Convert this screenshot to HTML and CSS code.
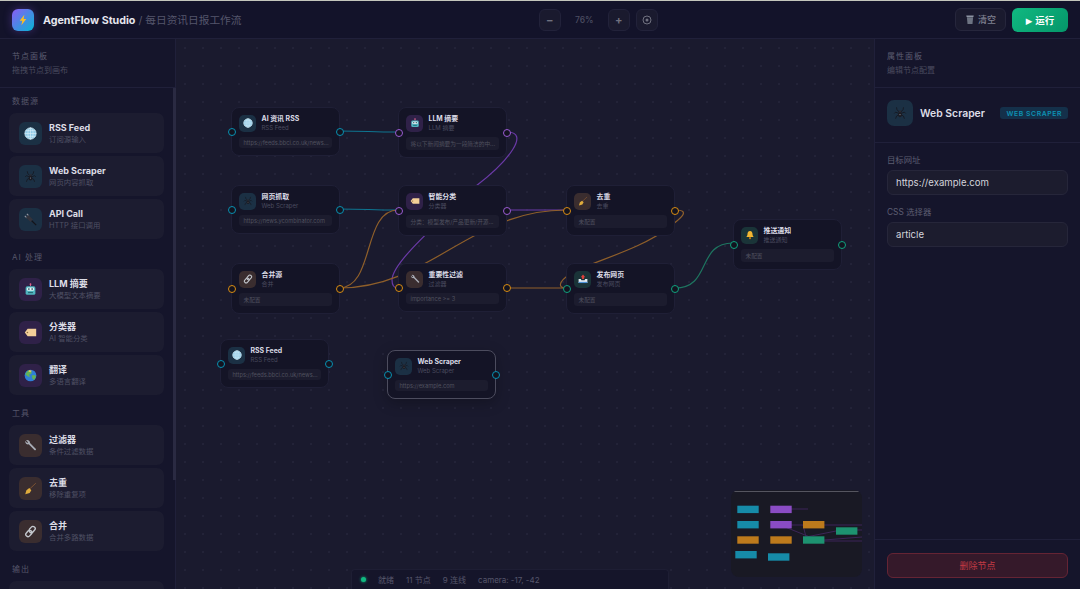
FILE: index.html
```html
<!DOCTYPE html>
<html lang="zh-CN">
<head>
    <meta charset="UTF-8">
    <meta name="viewport" content="width=device-width, initial-scale=1.0">
    <title>AgentFlow Studio</title>
    <link rel="stylesheet" href="styles.css">
</head>
<body>
    <svg class="sprite" xmlns="http://www.w3.org/2000/svg">
        <symbol id="i-bolt" viewBox="0 0 16 16"><path d="M9.8 1 3.6 9h3.5L5.8 15l6.6-8.4H8.8z" fill="#fbbf24"/></symbol>
        <symbol id="i-globe" viewBox="0 0 16 16"><circle cx="8" cy="8" r="7" fill="#8fc9e6"/><g fill="none" stroke="#d9eef7" stroke-width=".8"><circle cx="8" cy="8" r="7"/><ellipse cx="8" cy="8" rx="3.2" ry="7"/><path d="M8 1v14M1 8h14M2 4.5h12M2 11.500h12"/></g></symbol>
        <symbol id="i-spider" viewBox="0 0 16 16"><g fill="none" stroke="#15151c" stroke-width=".9"><path d="M7 7 4.500 4 4 1.500M9 7l2.500-3 .5-2.500M6.800 8.500 3 7 1.500 8.500M9.200 8.500 13 7l1.500 1.500M7 10l-3 1.500-1 3M9 10l3 1.500 1 3"/></g><ellipse cx="8" cy="6.500" rx="1.500" ry="1.400" fill="#2a2a33"/><ellipse cx="8" cy="10" rx="2.200" ry="2.800" fill="#1b1b22"/><circle cx="8" cy="9.800" r=".7" fill="#8a8a98"/></symbol>
        <symbol id="i-plug" viewBox="0 0 16 16"><path d="M3.500 6 1 3.500M6 3.500 3.500 1" stroke="#9a9aa4" stroke-width="1.300"/><path d="M5.500 2.500 11 8 8 11 2.500 5.500z" fill="#33333c"/><path d="M9.500 9.500 15 15" stroke="#14141a" stroke-width="1.500"/></symbol>
        <symbol id="i-robot" viewBox="0 0 16 16"><path d="M8 1v3" stroke="#c86b8a" stroke-width="1.200"/><circle cx="8" cy="1.500" r="1.100" fill="#e05d8a"/><rect x="2" y="4" width="12" height="10.500" rx="2" fill="#4fb3bf"/><rect x="3.500" y="5.500" width="9" height="4" rx="1.500" fill="#dff3f5"/><circle cx="6" cy="7.500" r="1" fill="#1d3b52"/><circle cx="10" cy="7.500" r="1" fill="#1d3b52"/><rect x="5" y="11" width="6" height="1.500" fill="#276a78"/></symbol>
        <symbol id="i-tag" viewBox="0 0 16 16"><path d="M4.500 3.500H15v9H4.500L1 8z" fill="#f3cf98"/><circle cx="4.200" cy="8" r="1" fill="#8f6b3f"/></symbol>
        <symbol id="i-earth" viewBox="0 0 16 16"><circle cx="8" cy="8" r="7.200" fill="#2f7fd6"/><path d="M5 1.500 9.500 3 9 6 6.500 6.500 7 10 4.500 9 1.500 6.500zM9.500 8l4 -.500 1.200 2-2.200 4-2-1.500z" fill="#62b356"/><path d="M6.500 1.200 9.500 2 8 4 5.500 3.500z" fill="#e4c25a"/></symbol>
        <symbol id="i-wrench" viewBox="0 0 16 16"><path d="M2.500 1.500 5 4 4 5 1.500 2.600A3.500 3.500 0 0 0 5.800 6.500l7 7a1.100 1.100 0 0 0 1.600-1.600l-7-7A3.500 3.500 0 0 0 2.500 1.500z" fill="#a9adb6"/></symbol>
        <symbol id="i-broom" viewBox="0 0 16 16"><path d="m14.500 1.500-8 7.500" stroke="#8a5a32" stroke-width="1"/><path d="M6.500 7.500 9 10l-2 3.500-5.500 1.500 1.500-5z" fill="#e0ac3c"/></symbol>
        <symbol id="i-link" viewBox="0 0 16 16"><g fill="none" stroke="#c4c8ce" stroke-width="1.700"><rect x="7.300" y="1.300" width="5.500" height="8.500" rx="2.700" transform="rotate(42 10 5.500)"/><rect x="3.200" y="6.200" width="5.500" height="8.500" rx="2.700" transform="rotate(42 6 10.500)"/></g></symbol>
        <symbol id="i-outbox" viewBox="0 0 16 16"><path d="M8 .8 11.500 5H9.500v3h-3V5H4.500z" fill="#e0403a"/><path d="M1 8h3.500l1 2h5l1-2H15v6.500H1z" fill="#e8edf3"/><path d="M1 12.500h14v2H1z" fill="#4d93d9"/></symbol>
        <symbol id="i-bell" viewBox="0 0 16 16"><path d="M8 1.500c-3 0-4 2.500-4 5 0 2.500-1 3.500-2 4.800h12c-1-1.300-2-2.300-2-4.800 0-2.500-1-5-4-5z" fill="#f2b632"/><circle cx="8" cy="13" r="1.700" fill="#b97a16"/></symbol>
        <symbol id="i-trash" viewBox="0 0 16 16"><path d="M2 1.500h12l-.6 2.500H2.600z" fill="#8d94a3"/><path d="M3 4.500h10l-1 10.500H4z" fill="#6d7482"/></symbol>
    </svg>

    <header class="topbar">
        <div class="brand">
            <div class="logo"><svg class="ico"><use href="#i-bolt"/></svg></div>
            <div class="brand-text"><strong>AgentFlow Studio</strong> / 每日资讯日报工作流</div>
        </div>
        <div class="zoom">
            <button class="zoom-btn">−</button>
            <span class="zoom-val">76%</span>
            <button class="zoom-btn">+</button>
            <button class="zoom-btn"><svg class="target" viewBox="0 0 10 10"><circle cx="5" cy="5" r="4" fill="none" stroke="currentColor"/><circle cx="5" cy="5" r="1.500" fill="currentColor"/></svg></button>
        </div>
        <div class="actions">
            <button class="btn-clear"><svg class="ico-btn"><use href="#i-trash"/></svg>清空</button>
            <button class="btn-run"><span class="play">▶</span>运行</button>
        </div>
    </header>

    <div class="workspace">
        <aside class="sidebar">
            <div class="panel-head">
                <div class="panel-title">节点面板</div>
                <div class="panel-sub">拖拽节点到画布</div>
            </div>
            <div class="palette">
                <div class="group-label">数据源</div>
                <div class="card"><div class="tile teal"><svg class="ico"><use href="#i-globe"/></svg></div><div><div class="card-title">RSS Feed</div><div class="card-sub">订阅源输入</div></div></div>
                <div class="card"><div class="tile teal"><svg class="ico"><use href="#i-spider"/></svg></div><div><div class="card-title">Web Scraper</div><div class="card-sub">网页内容抓取</div></div></div>
                <div class="card"><div class="tile teal"><svg class="ico"><use href="#i-plug"/></svg></div><div><div class="card-title">API Call</div><div class="card-sub">HTTP 接口调用</div></div></div>
                <div class="group-label">AI 处理</div>
                <div class="card"><div class="tile purple"><svg class="ico"><use href="#i-robot"/></svg></div><div><div class="card-title">LLM 摘要</div><div class="card-sub">大模型文本摘要</div></div></div>
                <div class="card"><div class="tile purple"><svg class="ico"><use href="#i-tag"/></svg></div><div><div class="card-title">分类器</div><div class="card-sub">AI 智能分类</div></div></div>
                <div class="card"><div class="tile purple"><svg class="ico"><use href="#i-earth"/></svg></div><div><div class="card-title">翻译</div><div class="card-sub">多语言翻译</div></div></div>
                <div class="group-label">工具</div>
                <div class="card"><div class="tile orange"><svg class="ico"><use href="#i-wrench"/></svg></div><div><div class="card-title">过滤器</div><div class="card-sub">条件过滤数据</div></div></div>
                <div class="card"><div class="tile orange"><svg class="ico"><use href="#i-broom"/></svg></div><div><div class="card-title">去重</div><div class="card-sub">移除重复项</div></div></div>
                <div class="card"><div class="tile orange"><svg class="ico"><use href="#i-link"/></svg></div><div><div class="card-title">合并</div><div class="card-sub">合并多路数据</div></div></div>
                <div class="group-label">输出</div>
                <div class="card"><div class="tile green"><svg class="ico"><use href="#i-outbox"/></svg></div></div>
            </div>
            <div class="scroll-thumb"></div>
        </aside>

        <main class="canvas">
            <svg class="edges" viewBox="176 39 699 550">
                <path class="e-teal" d="M339 131C368 131 369 132 398 132"/>
                <path class="e-teal" d="M339 209C368 209 369 210 398 210"/>
                <path class="e-purple" d="M507 132C530 132 510 160 476 186C440 222 392 262 392 280C392 285 394 288 398 288"/>
                <path class="e-purple" d="M507 210C536 210 537 210 566 210"/>
                <path class="e-orange" d="M339 288C375 288 362 210 398 210"/>
                <path class="e-orange" d="M339 288C430 288 470 210 566 210"/>
                <path class="e-orange" d="M507 288C536 288 537 288 566 288"/>
                <path class="e-orange" d="M675 210C692 210 680 219 668 228C640 250 590 262 570 274C558 282 558 288 566 288"/>
                <path class="e-green" d="M675 288C712 288 696 243 733 243"/>
            </svg>

            <div class="node n-rss"><i class="port left p-teal"></i><i class="port right p-teal"></i>
                <div class="node-head"><div class="node-ico teal"><svg class="ico"><use href="#i-globe"/></svg></div><div><div class="node-title">AI 资讯 RSS</div><div class="node-sub">RSS Feed</div></div></div>
                <div class="node-conf">https://feeds.bbci.co.uk/news...</div>
            </div>
            <div class="node n-llm"><i class="port left p-purple"></i><i class="port right p-purple"></i>
                <div class="node-head"><div class="node-ico purple"><svg class="ico"><use href="#i-robot"/></svg></div><div><div class="node-title">LLM 摘要</div><div class="node-sub">LLM 摘要</div></div></div>
                <div class="node-conf">将以下新闻摘要为一段简洁的中...</div>
            </div>
            <div class="node n-web"><i class="port left p-teal"></i><i class="port right p-teal"></i>
                <div class="node-head"><div class="node-ico teal"><svg class="ico"><use href="#i-spider"/></svg></div><div><div class="node-title">网页抓取</div><div class="node-sub">Web Scraper</div></div></div>
                <div class="node-conf">https://news.ycombinator.com</div>
            </div>
            <div class="node n-cls"><i class="port left p-purple"></i><i class="port right p-purple"></i>
                <div class="node-head"><div class="node-ico purple"><svg class="ico"><use href="#i-tag"/></svg></div><div><div class="node-title">智能分类</div><div class="node-sub">分类器</div></div></div>
                <div class="node-conf">分类：模型发布/产品更新/开源...</div>
            </div>
            <div class="node n-dedup"><i class="port left p-orange"></i><i class="port right p-orange"></i>
                <div class="node-head"><div class="node-ico orange"><svg class="ico"><use href="#i-broom"/></svg></div><div><div class="node-title">去重</div><div class="node-sub">去重</div></div></div>
                <div class="node-conf">未配置</div>
            </div>
            <div class="node n-merge"><i class="port left p-orange"></i><i class="port right p-orange"></i>
                <div class="node-head"><div class="node-ico orange"><svg class="ico"><use href="#i-link"/></svg></div><div><div class="node-title">合并源</div><div class="node-sub">合并</div></div></div>
                <div class="node-conf">未配置</div>
            </div>
            <div class="node n-filter"><i class="port left p-orange"></i><i class="port right p-orange"></i>
                <div class="node-head"><div class="node-ico orange"><svg class="ico"><use href="#i-wrench"/></svg></div><div><div class="node-title">重要性过滤</div><div class="node-sub">过滤器</div></div></div>
                <div class="node-conf">importance &gt;= 3</div>
            </div>
            <div class="node n-publish"><i class="port left p-green"></i><i class="port right p-green"></i>
                <div class="node-head"><div class="node-ico green"><svg class="ico"><use href="#i-outbox"/></svg></div><div><div class="node-title">发布网页</div><div class="node-sub">发布网页</div></div></div>
                <div class="node-conf">未配置</div>
            </div>
            <div class="node n-push"><i class="port left p-green"></i><i class="port right p-green"></i>
                <div class="node-head"><div class="node-ico green"><svg class="ico"><use href="#i-bell"/></svg></div><div><div class="node-title">推送通知</div><div class="node-sub">推送通知</div></div></div>
                <div class="node-conf">未配置</div>
            </div>
            <div class="node n-rss2"><i class="port left p-teal"></i><i class="port right p-teal"></i>
                <div class="node-head"><div class="node-ico teal"><svg class="ico"><use href="#i-globe"/></svg></div><div><div class="node-title">RSS Feed</div><div class="node-sub">RSS Feed</div></div></div>
                <div class="node-conf">https://feeds.bbci.co.uk/news...</div>
            </div>
            <div class="node n-web2 selected"><i class="port left p-teal"></i><i class="port right p-teal"></i>
                <div class="node-head"><div class="node-ico teal"><svg class="ico"><use href="#i-spider"/></svg></div><div><div class="node-title">Web Scraper</div><div class="node-sub">Web Scraper</div></div></div>
                <div class="node-conf">https://example.com</div>
            </div>

            <div class="statusbar">
                <i class="status-dot"></i>
                <span>就绪</span><span>11 节点</span><span>9 连线</span><span>camera: -17, -42</span>
            </div>

            <div class="minimap">
                <svg viewBox="731 490 131 87">
                    <path class="mm-view" d="M733 491.500H860"/>
                    <path class="mm-line" d="M791 509H808M791 525H803M824 525H862M780 525 815 539M803 525 806 537M806 537 836 531M824 540 862 537M824 541 862 541M857 530H862"/>
                    <g class="mm-teal"><rect x="737.300" y="505.700" width="21.400" height="7.400"/><rect x="737.300" y="521" width="21.400" height="7.400"/><rect x="735.300" y="551" width="21.400" height="7.400"/><rect x="768" y="553.300" width="21.400" height="7.400"/></g>
                    <g class="mm-purple"><rect x="770.300" y="505.700" width="21.400" height="7.400"/><rect x="770.300" y="521" width="21.400" height="7.400"/></g>
                    <g class="mm-orange"><rect x="803" y="521" width="21.400" height="7.400"/><rect x="737.300" y="536.300" width="21.400" height="7.400"/><rect x="770.300" y="536.300" width="21.400" height="7.400"/></g>
                    <g class="mm-green"><rect x="836" y="527.300" width="21.400" height="7.400"/><rect x="803" y="536.300" width="21.400" height="7.400"/></g>
                </svg>
            </div>
        </main>

        <aside class="props">
            <div class="panel-head">
                <div class="panel-title">属性面板</div>
                <div class="panel-sub">编辑节点配置</div>
            </div>
            <div class="props-node">
                <div class="props-ico teal"><svg class="ico"><use href="#i-spider"/></svg></div>
                <div class="props-name">Web Scraper</div>
                <div class="props-badge">WEB SCRAPER</div>
            </div>
            <div class="props-form">
                <label class="field-label">目标网址</label>
                <div class="field-input">https://example.com</div>
                <label class="field-label">CSS 选择器</label>
                <div class="field-input">article</div>
            </div>
            <div class="props-foot">
                <button class="btn-delete">删除节点</button>
            </div>
        </aside>
    </div>
</body>
</html>
```

FILE: styles.css
```css
* {
    box-sizing: border-box;
}
body {
    margin: 0;
    height: 100vh;
    overflow: hidden;
    display: flex;
    flex-direction: column;
    background: #1a1a2e;
    border-top: 1px solid #c4c6bc;
    color: #e2e2ea;
    font-family: Inter, "Noto Sans CJK SC", sans-serif;
}
button {
    font-family: inherit;
    cursor: pointer;
}
.sprite {
    display: none;
}
.ico {
    display: block;
    width: 100%;
    height: 100%;
}

/* top bar */
.topbar {
    height: 38px;
    flex: none;
    display: flex;
    align-items: center;
    justify-content: space-between;
    padding: 0 12px;
    background: #13132a;
    border-bottom: 1px solid #20203a;
}
.brand {
    display: flex;
    align-items: center;
    gap: 9px;
}
.logo {
    width: 22px;
    height: 22px;
    padding: 5px;
    border-radius: 6px;
    background: linear-gradient(135deg, #8b5cf6, #06b6d4);
    box-shadow: 0 0 8px rgba(139, 92, 246, 0.35);
}
.brand-text {
    font-size: 10.7px;
    color: #55566c;
}
.brand-text strong {
    color: #e6e6ee;
    font-weight: 700;
}
.zoom {
    display: flex;
    align-items: center;
}
.zoom-btn {
    width: 22px;
    height: 22px;
    padding: 0;
    display: flex;
    align-items: center;
    justify-content: center;
    border-radius: 6px;
    border: 1px solid #22223a;
    background: #1a1a2e;
    color: #70717f;
    font-size: 11px;
    font-weight: 700;
}
.zoom-btn + .zoom-btn {
    margin-left: 6px;
}
.zoom-val {
    width: 47px;
    text-align: center;
    font-size: 8.5px;
    font-weight: 500;
    color: #4d4e62;
}
.target {
    width: 10px;
    height: 10px;
}
.actions {
    display: flex;
    gap: 6px;
}
.btn-clear {
    width: 51px;
    height: 23px;
    padding: 0;
    display: flex;
    align-items: center;
    justify-content: center;
    gap: 3px;
    border-radius: 6px;
    border: 1px solid #26263c;
    background: #1a1a2e;
    color: #7f8090;
    font-size: 9px;
    font-weight: 500;
}
.ico-btn {
    width: 10px;
    height: 11px;
}
.btn-run {
    width: 56px;
    height: 24px;
    padding: 0;
    border: none;
    border-radius: 6px;
    background: linear-gradient(135deg, #10b981, #059669);
    color: #fff;
    font-size: 9.5px;
    font-weight: 600;
}
.play {
    font-family: "DejaVu Sans", sans-serif;
    font-size: 8.5px;
    margin-right: 3px;
}

/* three columns */
.workspace {
    flex: 1;
    min-height: 0;
    display: flex;
}
.sidebar {
    width: 176px;
    flex: none;
    position: relative;
    display: flex;
    flex-direction: column;
    background: #15152b;
    border-right: 1px solid #20203a;
}
.panel-head {
    height: 49px;
    flex: none;
    padding: 12px 12px 0;
    border-bottom: 1px solid #20203a;
}
.panel-title {
    font-size: 8px;
    line-height: 11px;
    letter-spacing: 1px;
    color: #5d5e72;
}
.panel-sub {
    margin-top: 3px;
    font-size: 8px;
    line-height: 11px;
    color: #4a4b5f;
}
.palette {
    flex: 1;
    min-height: 0;
    overflow: hidden;
    padding: 8px 11px 0 9px;
}
.group-label {
    margin: 0 0 6px 3px;
    font-size: 8px;
    line-height: 11px;
    letter-spacing: 1px;
    color: #55566a;
}
.card + .group-label {
    margin-top: 13px;
}
.card {
    height: 40px;
    margin-bottom: 3px;
    display: flex;
    align-items: center;
    gap: 7.500px;
    padding-left: 9.500px;
    border-radius: 7px;
    background: #1c1c30;
}
.tile {
    width: 23px;
    height: 23px;
    padding: 5px;
    border-radius: 6px;
}
.teal {
    background: #1b3044;
}
.purple {
    background: #2f2148;
}
.orange {
    background: #3a2d2f;
}
.green {
    background: #1a3438;
}
.card-title {
    font-size: 9px;
    line-height: 13px;
    font-weight: 700;
    color: #dcdce6;
}
.card-sub {
    font-size: 7.4px;
    line-height: 11px;
    color: #4f5064;
}
.scroll-thumb {
    position: absolute;
    top: 49px;
    right: -1px;
    width: 3px;
    height: 392px;
    background: #2a2a42;
}

/* canvas */
.canvas {
    flex: 1;
    position: relative;
    overflow: hidden;
    background-color: #1a1a2e;
    background-image: radial-gradient(circle, #232338 0.7px, transparent 0.9px);
    background-size: 18px 18px;
}
.edges {
    position: absolute;
    left: 0;
    top: 0;
    width: 699px;
    height: 550px;
    fill: none;
    stroke-width: 1.2;
}
.e-teal {
    stroke: #0e7490;
}
.e-purple {
    stroke: #6b3aa8;
}
.e-orange {
    stroke: #8f5f2a;
}
.e-green {
    stroke: #1e7560;
}
.node {
    position: absolute;
    width: 109px;
    padding: 6px 7px 7px;
    background: #141426;
    border: 1px solid #1f1f36;
    border-radius: 8px;
}
.node.selected {
    border: 1px solid #4c4c5e;
    box-shadow: 0 4px 14px rgba(0, 0, 0, 0.25);
}
.n-rss { left: 55px; top: 68px; }
.n-llm { left: 222px; top: 68px; }
.n-web { left: 55px; top: 146px; }
.n-cls { left: 222px; top: 146px; }
.n-dedup { left: 390px; top: 146px; }
.n-merge { left: 55px; top: 224px; }
.n-filter { left: 222px; top: 224px; }
.n-publish { left: 390px; top: 224px; }
.n-push { left: 557px; top: 180px; }
.n-rss2 { left: 44px; top: 300px; }
.n-web2 { left: 211px; top: 311px; }
.node-head {
    display: flex;
    align-items: center;
    gap: 5.500px;
}
.node-ico {
    width: 17px;
    height: 17px;
    padding: 3.500px;
    border-radius: 5px;
}
.node-title {
    font-size: 6.9px;
    line-height: 10px;
    font-weight: 700;
    color: #dcdce6;
}
.node-sub {
    font-size: 6px;
    line-height: 8px;
    color: #4a4b5f;
}
.node-conf {
    margin-top: 5px;
    padding: 2px 4.500px;
    border-radius: 3px;
    background: #1c1c2e;
    font-size: 5.7px;
    color: #50515f;
    white-space: nowrap;
}
.port {
    position: absolute;
    top: 50%;
    width: 8px;
    height: 8px;
    margin-top: -4px;
    border-radius: 50%;
    border: 1.500px solid;
    background: #13131f;
}
.port.left {
    left: -4.500px;
}
.port.right {
    right: -4.500px;
}
.p-teal { border-color: #0891b2; }
.p-purple { border-color: #9b5bd4; }
.p-orange { border-color: #d98c12; }
.p-green { border-color: #10a37f; }

/* status bar */
.statusbar {
    position: absolute;
    left: 175px;
    bottom: 0;
    width: 318px;
    height: 20px;
    display: flex;
    align-items: center;
    gap: 12px;
    padding-left: 9px;
    background: #15152a;
    border: 1px solid #1e1e34;
    border-bottom: none;
    border-radius: 4px 4px 0 0;
    font-size: 8px;
    color: #55566a;
}
.status-dot {
    width: 5px;
    height: 5px;
    border-radius: 50%;
    background: #10b981;
    box-shadow: 0 0 3px #10b981;
}

/* minimap */
.minimap {
    position: absolute;
    left: 555px;
    top: 451px;
    width: 131px;
    height: 87px;
    overflow: hidden;
    background: #191924;
    border-radius: 8px;
}
.minimap svg {
    display: block;
    width: 131px;
    height: 87px;
}
.mm-view {
    stroke: #55555f;
    stroke-width: 1;
}
.mm-line {
    fill: none;
    stroke: #3c2558;
    stroke-width: 1;
}
.mm-teal { fill: #168ba8; }
.mm-purple { fill: #8a4cc4; }
.mm-orange { fill: #bd7a1c; }
.mm-green { fill: #1d9270; }

/* properties */
.props {
    width: 206px;
    flex: none;
    display: flex;
    flex-direction: column;
    background: #15152b;
    border-left: 1px solid #20203a;
}
.props-node {
    height: 55px;
    flex: none;
    display: flex;
    align-items: center;
    padding: 0 12px 4px;
    border-bottom: 1px solid #20203a;
}
.props-ico {
    width: 26px;
    height: 26px;
    padding: 6px;
    border-radius: 7px;
}
.props-name {
    margin-left: 7px;
    font-size: 10.4px;
    font-weight: 600;
    color: #dedee8;
}
.props-badge {
    margin-left: auto;
    padding: 1.500px 6px;
    border-radius: 3px;
    background: #14304a;
    color: #0e93b4;
    font-size: 6.8px;
    line-height: 9px;
    font-weight: 600;
    letter-spacing: 0.6px;
}
.props-form {
    flex: 1;
    padding: 11px 12px 0;
}
.field-label {
    display: block;
    margin-bottom: 4px;
    font-size: 8.4px;
    line-height: 12px;
    color: #5d5e72;
}
.field-input {
    height: 25px;
    margin-bottom: 11px;
    padding-left: 8px;
    display: flex;
    align-items: center;
    border-radius: 6px;
    border: 1px solid #26263a;
    background: #1c1c2e;
    font-size: 9.6px;
    color: #d4d4dc;
}
.props-foot {
    height: 50px;
    flex: none;
    padding: 13px 12px 0;
    border-top: 1px solid #20203a;
}
.btn-delete {
    display: block;
    width: 100%;
    height: 25px;
    border-radius: 6px;
    border: 1px solid #652434;
    background: #35192a;
    color: #c23a44;
    font-size: 9px;
}
```
